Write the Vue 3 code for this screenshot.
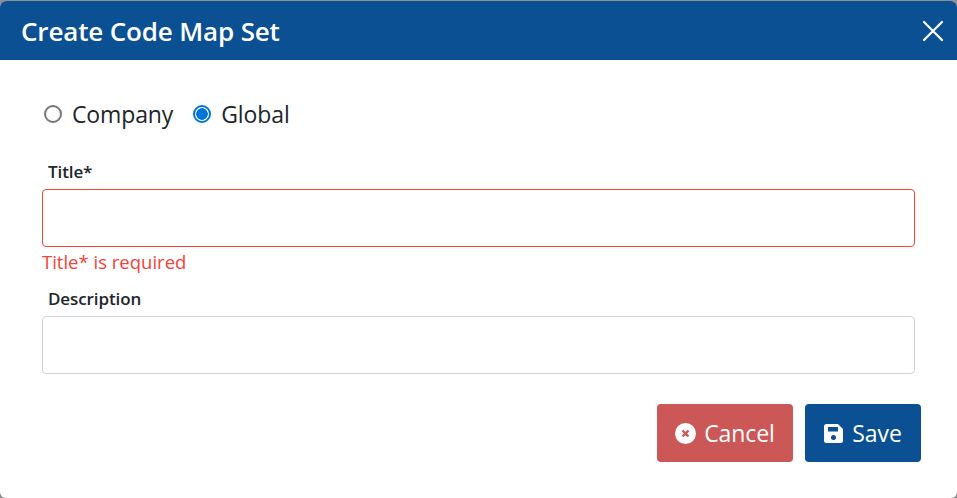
<script setup>
</script>

<template>
  <div class="page">
    <div class="dialog">
      <header class="head">
        <h1 class="title">Create Code Map Set</h1>
        <svg class="close" width="22" height="22" viewBox="0 0 22 22"><path d="M2 2 20 20M20 2 2 20" stroke="#fff" stroke-width="2.2" stroke-linecap="round" fill="none"/></svg>
      </header>
      <div class="body">
        <div class="radios">
          <label class="radio"><span class="dot"></span>Company</label>
          <label class="radio"><span class="dot on"></span>Global</label>
        </div>
        <label class="lbl first">Title*</label>
        <div class="input bad"></div>
        <div class="err">Title* is required</div>
        <label class="lbl second">Description</label>
        <div class="input"></div>
        <div class="actions">
          <button class="btn cancel">
            <svg width="21" height="21" viewBox="0 0 21 21"><circle cx="10.5" cy="10.5" r="10.5" fill="#fff"/><path d="M7.5 7.5 13.5 13.5M13.5 7.5 7.5 13.5" stroke="#cb5757" stroke-width="2.4" fill="none"/></svg>
            Cancel
          </button>
          <button class="btn save">
            <svg width="19" height="19" viewBox="0 0 19 19"><path fill-rule="evenodd" d="M2.5 0H14L19 5V16.5A2.5 2.5 0 0 1 16.500 19H2.500A2.500 2.500 0 0 1 0 16.500V2.500A2.500 2.500 0 0 1 2.500 0ZM4 3V7.500H14V3ZM9.500 11A2.500 2.500 0 1 0 9.500 16A2.500 2.500 0 1 0 9.500 11Z" fill="#fff"/></svg>
            Save
          </button>
        </div>
      </div>
    </div>
  </div>
</template>

<style scoped>
.page { width: 957px; height: 498px; background: #8f8f8f; padding-top: 1px; box-sizing: border-box; }
.dialog { height: 497px; background: #fff; font-family: "Open Sans", "Noto Sans", sans-serif; color: #212529; display: flex; flex-direction: column; border-radius: 6px; overflow: hidden; }
.head { height: 59px; flex: none; background: #0a5092; display: flex; align-items: center; justify-content: space-between; padding: 0 13px 0 21px; }
.title { margin: 0; font-size: 26px; font-weight: 600; line-height: 62px; color: #fff; letter-spacing: -0.15px; }
.body { padding: 0 42px; flex: 1; display: flex; flex-direction: column; }
.radios { display: flex; gap: 20px; margin-top: 38px; margin-left: 2px; height: 32px; align-items: center; }
.radio { display: flex; align-items: center; gap: 10px; font-size: 23px; letter-spacing: -0.12px; }
.dot { width: 18px; height: 18px; box-sizing: border-box; border: 2px solid #767676; border-radius: 50%; background: #fff; }
.dot.on { border-color: #0075d9; background: radial-gradient(circle, #0075d9 0 5.500px, #fff 6px); }
.lbl { display: block; font-size: 17px; font-weight: 600; padding-left: 6px; letter-spacing: -0.1px; height: 24px; line-height: 24px; }
.first { margin-top: 30px; }
.second { margin-top: 10px; }
.input { width: 873px; height: 58px; box-sizing: border-box; border: 1px solid #ced4da; border-radius: 4px; margin-top: 5px; }
.input.bad { border-color: #f44336; }
.err { font-size: 18.500px; color: #f44336; height: 30px; line-height: 30px; }
.actions { display: flex; justify-content: flex-end; gap: 12px; margin-top: 30px; margin-right: -6px; }
.btn { height: 58px; border: 0; border-radius: 4px; color: #fff; font: inherit; font-size: 23px; letter-spacing: -0.1px; display: flex; align-items: center; justify-content: center; gap: 8px; padding: 0; }
.cancel { width: 136px; background: #cb5757; }
.save { width: 116px; background: #0a5092; gap: 9px; }
</style>
